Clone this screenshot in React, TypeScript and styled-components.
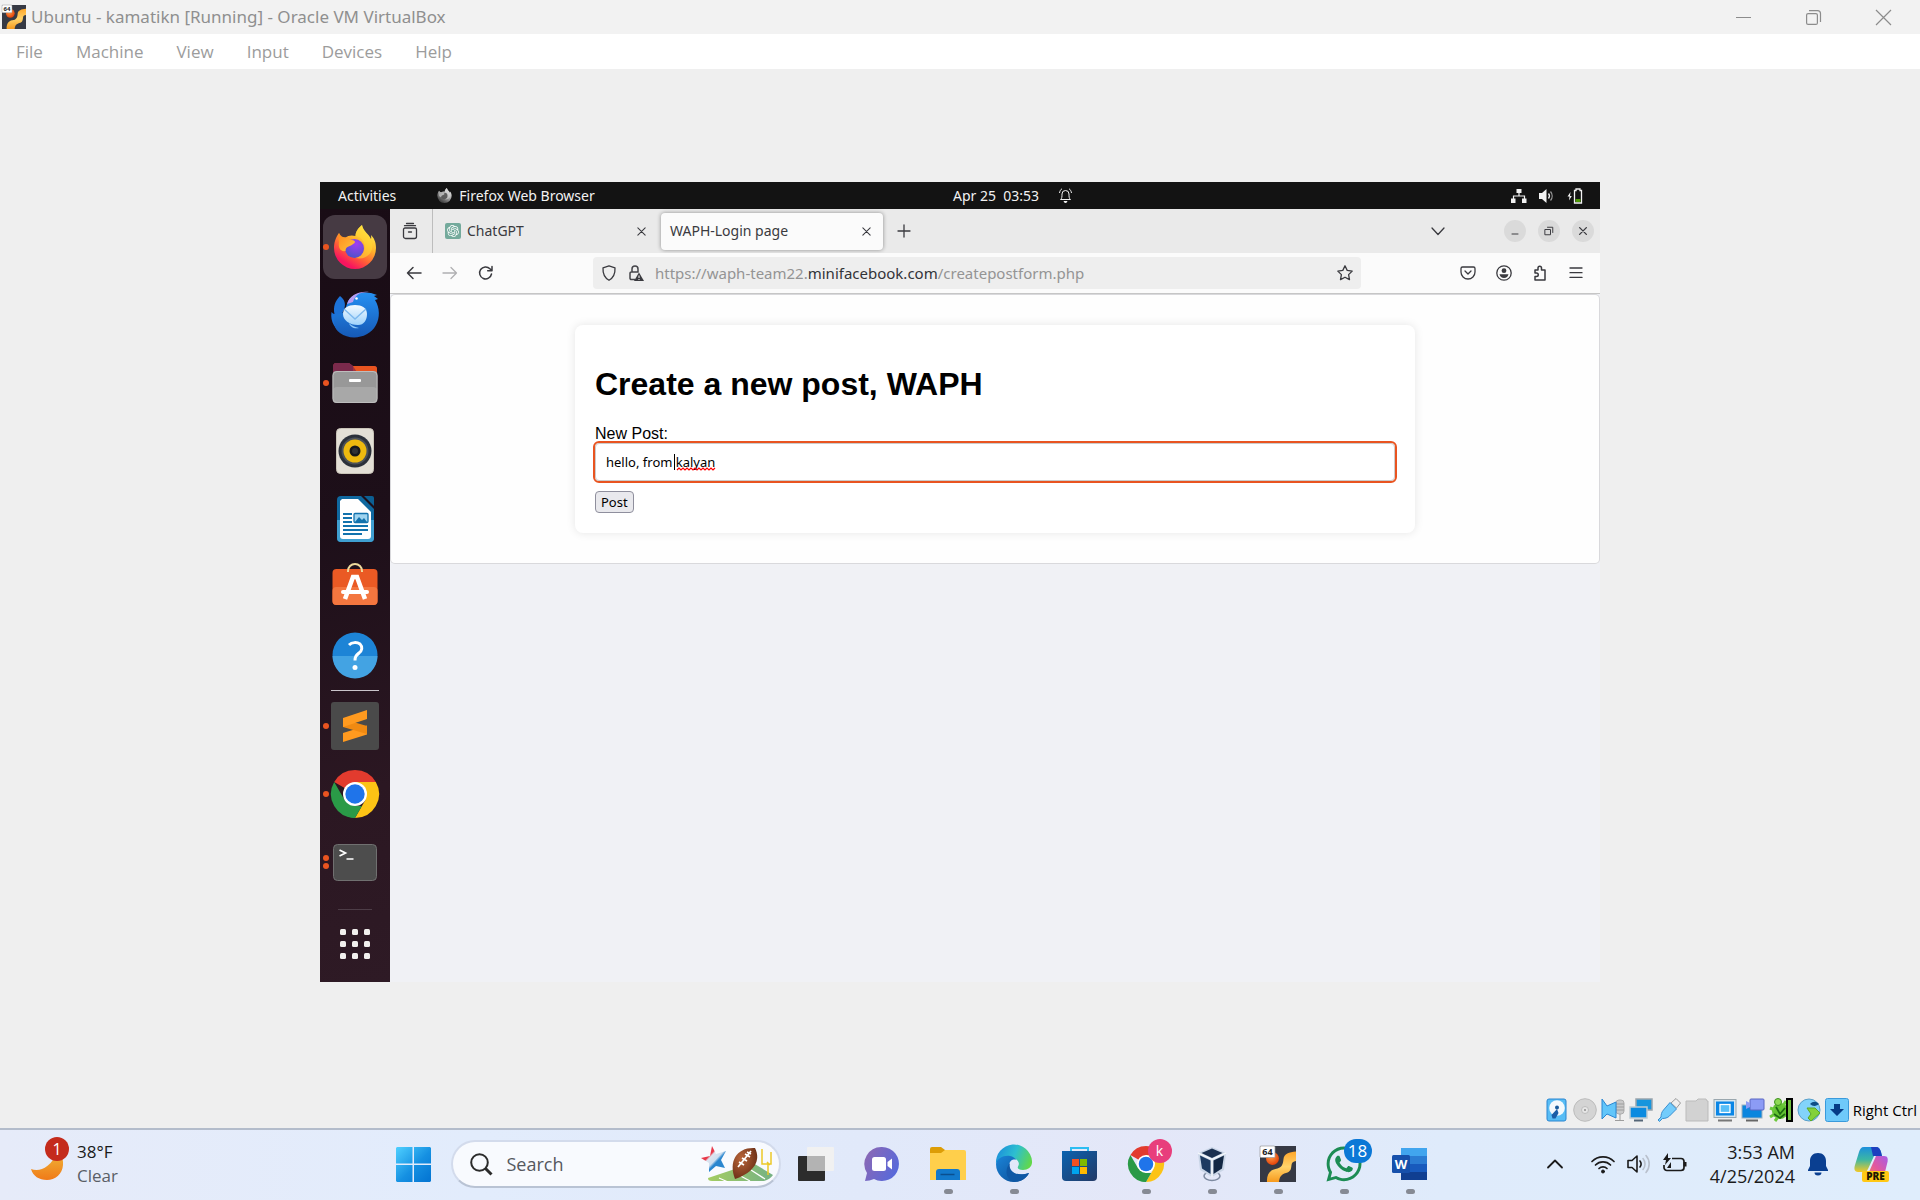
import React from "react";
import styled, { createGlobalStyle } from "styled-components";
import { SiOpenai } from "react-icons/si";
import { FaWhatsapp } from "react-icons/fa";

const winFont = `"Open Sans", "Noto Sans", sans-serif`;
const gnomeFont = `"Noto Sans", "Open Sans", sans-serif`;
const pageFont = `"Liberation Sans", Arial, sans-serif`;

const GlobalStyle = createGlobalStyle`
  * { box-sizing: border-box; }
  body { margin: 0; background: #efefef; font-family: ${winFont}; }
  button { border: 0; background: none; padding: 0; margin: 0; font: inherit; color: inherit; }
  svg { display: block; flex: none; overflow: visible; }
`;

/* ---------- host window ---------- */

const Desktop = styled.div`
  min-height: 100vh;
  display: flex;
  flex-direction: column;
`;

const TitleBar = styled.header`
  height: 34px;
  flex: none;
  display: flex;
  align-items: center;
  gap: 5px;
  padding: 0 2px;
  background: #f2f2f2;
  color: #8f8f8f;
`;

const WindowTitle = styled.h1`
  flex: 1;
  margin: 0;
  font-family: ${gnomeFont};
  font-size: 17px;
  font-weight: 400;
  line-height: 24px;
  white-space: nowrap;
`;

const WindowButton = styled.button`
  width: 70px;
  height: 34px;
  display: grid;
  place-items: center;
  color: #8c8c8c;
`;

const WindowButtons = styled.div`
  display: flex;
`;

const MenuBar = styled.nav`
  height: 35px;
  flex: none;
  display: flex;
  align-items: center;
  gap: 33px;
  padding: 0 16px;
  background: #ffffff;
  color: #9c9c9c;
`;

const MenuButton = styled.button`
  font-size: 17px;
  line-height: 24px;
`;

const Stage = styled.main`
  flex: 1;
  display: flex;
  align-items: center;
  justify-content: center;
`;

const StatusBar = styled.footer`
  height: 33px;
  flex: none;
  display: flex;
  align-items: center;
  justify-content: flex-end;
  gap: 4px;
  padding: 0 3px 4px;
  font-size: 15px;
  line-height: 24px;
  color: #000000;
`;

/* ---------- guest desktop ---------- */

const Guest = styled.section`
  width: 100%;
  max-width: 1280px;
  min-height: 800px;
  display: flex;
  flex-direction: column;
  background: #f0f1f5;
  font-family: ${gnomeFont};
`;

const TopBar = styled.div`
  height: 27px;
  flex: none;
  display: grid;
  grid-template-columns: 1fr auto 1fr;
  align-items: center;
  padding: 0 17px 0 18px;
  background: #131313;
  color: #f2f2f2;
  font-size: 14px;
  line-height: 20px;
`;

const TopGroup = styled.div<{ $gap: number; $end?: boolean }>`
  display: flex;
  align-items: center;
  gap: ${(p) => p.$gap}px;
  justify-content: ${(p) => (p.$end ? "flex-end" : "flex-start")};
`;

const TopApp = styled.button`
  display: flex;
  align-items: center;
  gap: 7px;
`;

const ClockButton = styled.button`
  display: flex;
  align-items: center;
  gap: 20px;
  margin-left: 104px;
  white-space: pre;
`;

const GuestBody = styled.div`
  flex: 1;
  display: flex;
`;

const Dock = styled.nav`
  width: 70px;
  flex: none;
  padding-top: 4px;
  display: flex;
  flex-direction: column;
  align-items: center;
  background: linear-gradient(165deg, #190c15 0%, #1d0f19 40%, #2b1722 75%, #2e1a25 100%);
`;

const DockItem = styled.button`
  position: relative;
  width: 70px;
  height: 68px;
  display: grid;
  place-items: center;
`;

const DockTile = styled.span<{ $active?: boolean }>`
  width: 64px;
  height: 64px;
  border-radius: 12px;
  display: grid;
  place-items: center;
  background: ${(p) => (p.$active ? "#463a43" : "transparent")};
`;

const Running = styled.span`
  position: absolute;
  left: 3px;
  top: 0;
  bottom: 0;
  display: flex;
  flex-direction: column;
  justify-content: center;
  gap: 2px;
`;

const RunningDot = styled.i`
  width: 6px;
  height: 6px;
  border-radius: 3px;
  background: #e95420;
`;

const DockRule = styled.hr<{ $faint?: boolean }>`
  width: ${(p) => (p.$faint ? 34 : 48)}px;
  height: 1px;
  flex: none;
  border: 0;
  margin: ${(p) => (p.$faint ? "auto 0 0" : "1px 0")};
  background: ${(p) => (p.$faint ? "#4d3d47" : "#c9c4ca")};
`;

const AppsButton = styled.button`
  height: 72px;
  flex: none;
  padding-bottom: 4px;
  display: grid;
  place-items: center;
`;

/* ---------- browser ---------- */

const Browser = styled.div`
  flex: 1;
  min-width: 0;
  display: flex;
  flex-direction: column;
  color: #3a3a3f;
`;

const TabStrip = styled.div`
  height: 44px;
  flex: none;
  display: flex;
  align-items: center;
  background: #eaeaea;
  font-size: 14px;
  line-height: 20px;
`;

const FirefoxView = styled.button`
  width: 43px;
  height: 44px;
  display: grid;
  place-items: center;
  padding-right: 2px;
  border-right: 1px solid #bdbdbd;
`;

const Tab = styled.div<{ $active?: boolean }>`
  width: ${(p) => (p.$active ? 222 : 228)}px;
  height: 37px;
  display: flex;
  align-items: center;
  gap: 6px;
  padding: ${(p) => (p.$active ? "0 11px 0 9px" : "0 14px 0 12px")};
  border-radius: 4px;
  background: ${(p) => (p.$active ? "#fbfbfb" : "transparent")};
  box-shadow: ${(p) => (p.$active ? "0 0 4px rgba(0, 0, 0, 0.4)" : "none")};
`;

const TabLabel = styled.span`
  flex: 1;
  white-space: nowrap;
`;

const SmallButton = styled.button`
  width: 12px;
  height: 20px;
  display: grid;
  place-items: center;
`;

const NewTab = styled.button`
  width: 42px;
  height: 36px;
  display: grid;
  place-items: center;
`;

const TabTools = styled.div`
  flex: 1;
  display: flex;
  align-items: center;
  justify-content: flex-end;
  gap: 12px;
  padding-right: 6px;
`;

const ListTabs = styled.button`
  width: 36px;
  height: 36px;
  margin-right: 36px;
  display: grid;
  place-items: center;
`;

const RoundButton = styled.button`
  width: 22px;
  height: 22px;
  border-radius: 11px;
  display: grid;
  place-items: center;
  background: #dadada;
`;

const Toolbar = styled.div`
  height: 41px;
  flex: none;
  display: flex;
  align-items: center;
  padding: 0 10px 0 16px;
  background: #fbfbfb;
  border-bottom: 1px solid #c6c6c6;
`;

const ToolGroup = styled.div`
  flex: 1;
  display: flex;
  gap: 20px;
`;

const ToolButton = styled.button`
  width: 16px;
  height: 32px;
  display: grid;
  place-items: center;
`;

const UrlBar = styled.div`
  width: 768px;
  height: 32px;
  display: flex;
  align-items: center;
  gap: 11px;
  padding: 0 8px;
  border-radius: 4px;
  background: #eeeeee;
`;

const Url = styled.div`
  flex: 1;
  font-size: 15px;
  line-height: 22px;
  color: #949494;
  white-space: nowrap;
`;

const Host = styled.span`
  color: #333338;
`;

const RightTools = styled.div`
  margin-left: 99px;
  display: flex;
  align-items: center;
  gap: 20px;
  padding-right: 6px;
`;

const WebPage = styled.article`
  margin: 1px 1px 0;
  padding: 30px;
  background: #fefefe;
  border-radius: 4px;
  box-shadow: 0 0 0 1px #d9d9dc;
  font-family: ${pageFont};
  color: #000000;
`;

const Card = styled.div`
  max-width: 840px;
  margin: 0 auto;
  padding: 20px;
  border-radius: 8px;
  background: #ffffff;
  box-shadow: 0 0 10px rgba(0, 0, 0, 0.1);
`;

const PostHeading = styled.h2`
  margin: 20px 0 22px;
  font-size: 32px;
  line-height: 38px;
`;

const PostLabel = styled.label`
  display: block;
  font-size: 16px;
  line-height: 18px;
`;

const PostField = styled.div`
  position: relative;
  margin-bottom: 10px;
`;

const PostInput = styled.input`
  display: block;
  width: 100%;
  height: 38px;
  padding: 10px;
  border: 1px solid #cccccc;
  border-radius: 4px;
  outline: 2px solid #e95420;
  font-family: ${gnomeFont};
  font-size: 13px;
  background: #ffffff;
  color: #000000;
`;

const Caret = styled.i`
  position: absolute;
  left: 79px;
  top: 11px;
  width: 1px;
  height: 16px;
  background: #000000;
`;

const Squiggle = styled.svg`
  position: absolute;
  left: 82px;
  top: 24px;
`;

const PostButton = styled.button`
  display: block;
  height: 22px;
  padding: 0 5px;
  border: 1px solid #8f8f9d;
  border-radius: 4px;
  background: #e9e9ed;
  font-family: ${gnomeFont};
  font-size: 13px;
  line-height: 20px;
`;

/* ---------- taskbar ---------- */

const Taskbar = styled.footer`
  height: 72px;
  flex: none;
  display: grid;
  grid-template-columns: 1fr auto 1fr;
  align-items: center;
  padding-bottom: 2px;
  border-top: 2px solid #b3bccb;
  background: linear-gradient(90deg, #e6ebf9 0%, #e2ecfc 25%, #e1e9fa 45%, #e4e7f8 60%, #dfebfb 75%, #dfedfc 100%);
`;

const Weather = styled.button`
  justify-self: start;
  display: flex;
  align-items: center;
  gap: 9px;
  padding-left: 30px;
  text-align: left;
  font-size: 17px;
  line-height: 24px;
  color: #1b1b1b;
`;

const Muted = styled.span`
  color: #5a5e66;
`;

const Lines = styled.span`
  display: grid;
`;

const Launcher = styled.div`
  display: flex;
  align-items: center;
  margin-right: 82px;
`;

const StartButton = styled.button`
  margin-right: 20px;
`;

const SearchBox = styled.label`
  width: 330px;
  height: 48px;
  margin-right: 2px;
  display: flex;
  align-items: center;
  gap: 14px;
  padding: 0 6px 0 17px;
  border: 2px solid #d3dbec;
  border-bottom-color: #b9c3d4;
  border-radius: 24px;
  background: #f8fafe;
`;

const SearchInput = styled.input`
  flex: 1;
  min-width: 0;
  padding: 0;
  border: 0;
  outline: 0;
  background: transparent;
  font-family: ${winFont};
  font-size: 18px;
  line-height: 26px;
  &::placeholder {
    color: #55585e;
    opacity: 1;
  }
`;

const TaskButton = styled.button`
  position: relative;
  width: 66px;
  height: 68px;
  display: grid;
  place-items: center;
`;

const OpenMark = styled.i`
  position: absolute;
  left: 29px;
  bottom: 4px;
  width: 9px;
  height: 5px;
  border-radius: 3px;
  background: #868a94;
`;

const Badge = styled.span<{ $bg: string; $wide?: boolean }>`
  position: absolute;
  right: ${(p) => (p.$wide ? 5 : 7)}px;
  top: 9px;
  width: ${(p) => (p.$wide ? 28 : 24)}px;
  height: 24px;
  border-radius: 12px;
  background: ${(p) => p.$bg};
  color: #ffffff;
  font-size: ${(p) => (p.$wide ? 17 : 14)}px;
  line-height: 24px;
  text-align: center;
`;

const MoonBox = styled.span`
  position: relative;
  width: 38px;
  height: 48px;
`;

const AlertBadge = styled.span`
  position: absolute;
  left: 15px;
  top: -3px;
  width: 24px;
  height: 24px;
  border-radius: 12px;
  background: #c42b1c;
  color: #ffffff;
  font-size: 16px;
  line-height: 24px;
  text-align: center;
`;

const MoonArt = styled.svg`
  margin-top: 11px;
`;

const Tray = styled.div`
  justify-self: end;
  display: flex;
  align-items: center;
  padding-right: 32px;
  color: #1b1b1b;
`;

const Chevron = styled.button`
  margin-right: 28px;
`;

const TrayGroup = styled.button`
  display: flex;
  align-items: center;
  gap: 12px;
`;

const Clock = styled.button`
  margin: 0 13px 0 23px;
  display: grid;
  text-align: right;
  font-size: 18px;
  line-height: 24px;
`;

const CopilotButton = styled.button`
  position: relative;
  margin-left: 26px;
`;

const PreTag = styled.span`
  position: absolute;
  right: -1px;
  bottom: -1px;
  width: 27px;
  height: 11px;
  border-radius: 2px;
  background: #ffc815;
  color: #201600;
  font-size: 10px;
  font-weight: 800;
  line-height: 11px;
  text-align: center;
`;

/* ---------- drawings ---------- */

const VmLogo = ({ size }: { size: number }) => (
  <svg width={size} height={size} viewBox="0 0 36 36">
    <defs>
      <linearGradient id="vmflow" x1="0" y1="0" x2="0" y2="1">
        <stop offset="0" stopColor="#ffa62a" />
        <stop offset=".5" stopColor="#ffd36b" />
        <stop offset="1" stopColor="#f79a1d" />
      </linearGradient>
      <radialGradient id="vmball" cx=".4" cy=".35" r=".7">
        <stop offset="0" stopColor="#ffa04a" />
        <stop offset="1" stopColor="#e23c05" />
      </radialGradient>
    </defs>
    <rect width="36" height="36" fill="#363944" />
    <path d="M36 5.500C29 6 24 8 23.500 13c-.5 6-2 9-8 10-6 1-9 6-8.500 13h12c.5-5 2-7.500 7-9 5-1.500 5-4 5.500-8 .3-2.500 1.500-3.500 4.500-4z" fill="url(#vmflow)" />
    <circle cx="12.500" cy="12.500" r="6.500" fill="url(#vmball)" />
    <rect x="0" y="0" width="15" height="11.500" rx="1" fill="#fff" stroke="#9a9a9a" strokeWidth=".7" />
    <text x="7.500" y="9" textAnchor="middle" fontFamily="Open Sans" fontSize="9" fontWeight="700" fill="#222">64</text>
  </svg>
);

const Chrome = ({ size }: { size: number }) => (
  <svg width={size} height={size} viewBox="0 0 48 48">
    <path d="M24 24 3.200 12A24 24 0 0 1 44.800 12L44.800 12H24z" fill="#e23b2e" />
    <path d="M3.200 12 13.600 30 24 36 24 48A24 24 0 0 1 3.200 12z" fill="#2a9a47" />
    <path d="M44.800 12H24L34.400 30 24 48A24 24 0 0 0 44.800 12z" fill="#fcc315" />
    <path d="M13.600 30 24 36H30.900L24 48A24 24 0 0 1 18 47z" fill="#2a9a47" />
    <circle cx="24" cy="24" r="12" fill="#fff" />
    <circle cx="24" cy="24" r="9.700" fill="#1f74ea" />
  </svg>
);

const FoxArt = styled.svg<{ $mono?: boolean }>`
  filter: ${(p) => (p.$mono ? "grayscale(1)" : "none")};
`;

const Firefox = ({ size = 44, mono }: { size?: number; mono?: boolean }) => (
  <FoxArt $mono={mono} width={size} height={size} viewBox="0 0 44 44">
    <defs>
      <linearGradient id="ffbody" x1=".85" y1=".1" x2=".3" y2="1">
        <stop offset="0" stopColor="#fff14d" />
        <stop offset=".35" stopColor="#ffb52a" />
        <stop offset=".65" stopColor="#ff5e37" />
        <stop offset=".9" stopColor="#f7155f" />
      </linearGradient>
      <radialGradient id="ffglobe" cx=".6" cy=".25" r=".8">
        <stop offset="0" stopColor="#a23df2" />
        <stop offset="1" stopColor="#4a53c9" />
      </radialGradient>
      <linearGradient id="fffox" x1="0" y1="0" x2="1" y2="1">
        <stop offset="0" stopColor="#ff8a1e" />
        <stop offset="1" stopColor="#ffc43b" />
      </linearGradient>
    </defs>
    <path d="M29 0c-4 3-6.500 7-6.500 11-7-2-12 2-13 6L6 8C2 13 1 19 1 23a21 21 0 0 0 42 0c0-6-2-10-5-13 .3 2 .3 3 0 4C36 9 30 6 29 0z" fill="url(#ffbody)" />
    <circle cx="21.500" cy="23.500" r="9.500" fill="url(#ffglobe)" />
    <path d="M6 8c1 2 2.500 3.500 4 4 3 0 4.500 1 6 3h3c3 .5 3.500 1.500 2.500 3-2 2-5 3-7 4-1.500 1-2 2-2 4C7 27 5 22 6 17c-.6-3-.6-6 0-9z" fill="url(#fffox)" />
    <path d="M29 0c-4 3-6.500 7-6.500 11 6 1 9.500 6 9 12-.5 5-4 9-9 10 9 2 16-3 17-11C40 13 30 9 29 0z" fill="#ffd735" opacity=".6" />
  </FoxArt>
);

const Thunderbird = () => (
  <svg width="48" height="46" viewBox="0 0 48 46">
    <defs>
      <linearGradient id="tb" x1="0" y1="0" x2="0" y2="1">
        <stop offset="0" stopColor="#2590f2" />
        <stop offset="1" stopColor="#1659b6" />
      </linearGradient>
      <linearGradient id="tbm" x1="0" y1="0" x2="0" y2="1">
        <stop offset="0" stopColor="#f4faff" />
        <stop offset="1" stopColor="#9fd3fb" />
      </linearGradient>
    </defs>
    <path d="M9 4c5 4 6 8 4 14l-3 5C5 31 8 37 14 42 4 38-1 30 .5 20c1 1 2 2 3 2C2 15 4 9 9 4z" fill="#1c72d8" />
    <path d="M16 12C19 3 28-1 40 1l6 2-3 1 4 3-3 1c5 8 5 18 1 25-7 13-25 16-36 8C3 37 2 30 4 24l9-4z" fill="url(#tb)" />
    <path d="M16 12C19 3 28-1 38 0c-11 0-14 4-16 10-2 1-4 1-6 2z" fill="#b79cf2" />
    <circle cx="25.500" cy="6.500" r="1.300" fill="#fff" />
    <path d="M12 22c0-6 5-9 12-9s12 3 12 9-3 11-9 11c-9 0-15-5-15-11z" fill="url(#tbm)" />
    <path d="M13 17l11 10 11-10" fill="none" stroke="#7cb8ee" strokeWidth="1.300" />
    <path d="M18 31c3 3 6 4 10 5-5 1-9-1-10-5z" fill="#8cc9fa" />
  </svg>
);

const Files = () => (
  <svg width="46" height="42" viewBox="0 0 46 42">
    <path d="M1 5c0-2.500 1-4 3-4h13l4 3h21c2 0 3 1 3 3v8H1z" fill="#a8323a" />
    <path d="M21 4h21c2 0 3 1 3 3v8H28z" fill="#e95420" />
    <path d="M1 5c0-2.500 1-4 3-4h13l4 3v11H1z" fill="#7b2a4c" />
    <rect x=".5" y="9" width="45" height="32" rx="4" fill="#989898" />
    <rect x="1" y="25" width="44" height="16" rx="4" fill="#a8a8a8" />
    <rect x="1" y="9.500" width="44" height="31" rx="4" fill="none" stroke="#bdbdbd" />
    <rect x="17" y="17" width="12" height="3" rx="1" fill="#fff" />
  </svg>
);

const Rhythmbox = () => (
  <svg width="38" height="46" viewBox="0 0 38 46">
    <rect x=".5" y=".5" width="37" height="45" rx="4" fill="#e3dfd6" stroke="#c9c4b8" />
    <circle cx="19" cy="23" r="16.500" fill="#2b303a" />
    <circle cx="19" cy="23" r="13.500" fill="#4c5158" />
    <circle cx="19" cy="23" r="11.500" fill="#edb90f" />
    <circle cx="19" cy="23" r="5.500" fill="#17191c" />
    <circle cx="19" cy="23" r="3" fill="#303236" />
  </svg>
);

const Writer = () => (
  <svg width="38" height="46" viewBox="0 0 38 46">
    <path d="M5 0h20l13 13v29a4 4 0 0 1-4 4H5a4 4 0 0 1-4-4V4a4 4 0 0 1 4-4z" fill="#0f689f" />
    <path d="M1 24h37v18a4 4 0 0 1-4 4H5a4 4 0 0 1-4-4z" fill="#3f9fd0" />
    <path d="M28 0h8a2 2 0 0 1 2 2v8z" fill="#0c5f93" />
    <path d="M6 3h16l13 13v24a3 3 0 0 1-3 3H7a3 3 0 0 1-3-3V5z" fill="#fff" />
    <path d="M7 18h9M7 22h9M7 26h9M7 30h25M7 34h25M7 38h19" stroke="#1272ad" strokeWidth="2" />
    <rect x="18" y="17.500" width="14" height="9" rx="1" fill="#9fd4f0" stroke="#1272ad" strokeWidth="1.300" />
    <path d="M19 26l4-5 3 3 2-2 3 4z" fill="#1272ad" />
  </svg>
);

const Software = () => (
  <svg width="46" height="48" viewBox="0 0 46 48">
    <rect x=".5" y="6" width="45" height="36" rx="4" fill="#ea5a24" />
    <rect x=".5" y="24" width="45" height="18" rx="4" fill="#f3763f" />
    <path d="M16 9V8a7 7 0 0 1 14 0v1" fill="none" stroke="#eeda9c" strokeWidth="2" />
    <path d="M13 36l8-22h4l8 22" fill="none" stroke="#fff" strokeWidth="4.500" />
    <path d="M11 29h24" stroke="#fff" strokeWidth="4" strokeLinecap="round" />
  </svg>
);

const Help = () => (
  <svg width="46" height="46" viewBox="0 0 46 46">
    <circle cx="23" cy="23" r="22.500" fill="#1d84d6" />
    <path d="M.5 24a22.500 22.500 0 0 0 45 0z" fill="#43a3e3" />
    <path d="M17 13c3-3 8-3 11-1 3 3 2 7-1 9-3 2.500-4 3.500-4 7.500" fill="none" stroke="#fff" strokeWidth="3" />
    <circle cx="23" cy="35.500" r="2.500" fill="#fff" />
  </svg>
);

const Sublime = () => (
  <svg width="48" height="48" viewBox="0 0 48 48">
    <rect width="48" height="48" rx="3" fill="#4a4a4a" />
    <path d="M12 31l24-7.500v9L12 40z" fill="#ff9a1f" />
    <path d="M12 17l24 7v8l-24-7z" fill="#f08a12" />
    <path d="M12 16l24-8v9l-24 8z" fill="#ff9a1f" />
  </svg>
);

const Terminal = () => (
  <svg width="44" height="37" viewBox="0 0 44 37">
    <rect x=".5" y=".5" width="43" height="36" rx="4" fill="#4d4d4d" stroke="#707070" />
    <path d="M6.500 6l6 3-6 3M13.500 15h7" fill="none" stroke="#fff" strokeWidth="1.700" />
  </svg>
);

const AppGrid = () => (
  <svg width="30" height="30" viewBox="0 0 30 30" fill="#f3f1ef">
    {[0, 12, 24].map((y) => [0, 12, 24].map((x) => <rect key={`${x}-${y}`} x={x} y={y} width="6" height="6" rx="1.500" />))}
  </svg>
);

const Glyph = ({ d, size = 16, w = 1.3 }: { d: string; size?: number; w?: number }) => (
  <svg width={size} height={size} viewBox="0 0 16 16" fill="none" stroke="currentColor" strokeWidth={w} strokeLinecap="round" strokeLinejoin="round">
    <path d={d} />
  </svg>
);

const paths = {
  view: "M1.500 6.500a1.500 1.500 0 0 1 1.500-1.500h10a1.500 1.500 0 0 1 1.500 1.500v7a2 2 0 0 1-2 2h-9a2 2 0 0 1-2-2zM2.500 2.700h11M4.500.5h7M6.500 9h3",
  close: "M3.500 3.500l9 9M12.500 3.500l-9 9",
  plus: "M8 2v12M2 8h12",
  back: "M15 8H1.500M7 2.500L1.500 8 7 13.500",
  forward: "M1 8h13.500M9 2.500L14.500 8 9 13.500",
  reload: "M13.500 9a6 6 0 1 1-1.600-5.300L13.800 5.600M14 1.500v4.300H9.700",
  shield: "M8 .8l6 2c.3 5.500-1.500 10-6 12.500C3.500 12.800 1.700 8.300 2 2.800z",
  star: "M8 .8l2.200 4.600 5 .7-3.600 3.500.9 5L8 12.200l-4.500 2.400.9-5L.8 6.100l5-.7z",
  pocket: "M1 3.500A1.500 1.500 0 0 1 2.500 2h11A1.500 1.500 0 0 1 15 3.500V7a7 7 0 0 1-14 0zM5 6l3 3 3-3",
  puzzle: "M3 5h3V3a1.700 1.700 0 0 1 3.500 0v2H13v10H3v-3.500h1.500a1.700 1.700 0 0 0 0-3.500H3z",
  menu: "M2 3h12M2 7.700h12M2 12.400h12",
  down: "M2 5l6 6.500L14 5",
};

const Lock = () => (
  <svg width="16" height="16" viewBox="0 0 16 16">
    <path d="M4 7V4a3 3 0 0 1 6 0v3M7 14.500H3.300A1.300 1.300 0 0 1 2 13.200V8.300A1.300 1.300 0 0 1 3.300 7h7.400" fill="none" stroke="#45454a" strokeWidth="1.500" />
    <path d="M11 7.500l5 8.500H6z" fill="#3a3a3f" />
    <path d="M11 10.500v2.500M11 14v1" stroke="#fff" />
  </svg>
);

const Account = () => (
  <svg width="16" height="16" viewBox="0 0 16 16">
    <circle cx="8" cy="8" r="7.200" fill="none" stroke="#3a3a3f" strokeWidth="1.300" />
    <circle cx="8" cy="5.700" r="2.400" fill="#3a3a3f" />
    <path d="M3.500 9.300h9a4.600 4.600 0 0 1-9 0z" fill="#3a3a3f" />
  </svg>
);

const SystemIcons = () => (
  <>
    <svg width="16" height="14" viewBox="0 0 16 14" fill="#f2f2f2">
      <path d="M5.500 0h5v4h-5zM0 9.500h4.500V14H0zM11 9.500h4.500V14H11z" />
      <path d="M8 4v3M2.500 10V7h11v3" fill="none" stroke="#f2f2f2" strokeWidth="1.200" />
    </svg>
    <svg width="16" height="16" viewBox="0 0 16 16">
      <path d="M0 5h3l4.500-4v14L3 11H0z" fill="#f2f2f2" />
      <path d="M9.500 5.500a4 4 0 0 1 0 5" fill="none" stroke="#f2f2f2" strokeWidth="1.300" />
      <path d="M11.500 3.500a7 7 0 0 1 0 9" fill="none" stroke="#999" strokeWidth="1.300" />
    </svg>
    <svg width="16" height="16" viewBox="0 0 16 16">
      <path d="M3.500 4L.5 8.500h2l-.5 4L4.800 8H3z" fill="#f2f2f2" />
      <path d="M7.500 2.500H9v-1.500h4v1.500h1.500v12.500h-7z" fill="none" stroke="#f2f2f2" strokeWidth="1.300" />
      <rect x="8.500" y="11" width="5" height="3" fill="#4e9a06" />
    </svg>
  </>
);

const Bell = () => (
  <svg width="13" height="16" viewBox="0 0 13 16" fill="none" stroke="#f2f2f2">
    <path d="M1.500 11.500c1.500-1 1.500-3 1.500-5.500a3.500 3.500 0 0 1 7 0c0 2.500 0 4.500 1.500 5.500zM.5 5C.8 3 1.800 1.500 3 .7M12.500 5c-.3-2-1.300-3.500-2.500-4.300" />
    <path d="M5 13.500h3L6.500 15z" fill="#f2f2f2" />
  </svg>
);

/* the row of device indicators under the guest screen */
const deviceIcons: { name: string; art: React.ReactNode }[] = [
  { name: "Hard disks", art: <><rect x="2" y="1" width="19" height="22" rx="2" fill="#58bdf5" stroke="#2a86d1" /><circle cx="12" cy="10" r="7.800" fill="#f3f9fd" /><circle cx="12" cy="9.500" r="2" fill="#185a9c" /><path d="M12 11l-5.500 6 1 3.500h3l3-5.500z" fill="#1b5ea8" /></> },
  { name: "Optical drives", art: <><circle cx="12" cy="12" r="11.300" fill="#d4d4d4" stroke="#bcbcbc" /><circle cx="12" cy="12" r="3.500" fill="#e6e6e6" stroke="#bdbdbd" /><circle cx="12" cy="12" r="1" fill="#8d8d8d" /></> },
  { name: "Audio", art: <><rect x="15" y="2" width="8" height="14" rx="3" fill="#c9c9c9" stroke="#acacac" /><path d="M14 6h9M14 9h9M14 12h9M19 16v6M14 22.500h9" stroke="#9d9d9d" /><path d="M1 1l5 7 9-4v16l-9-4-5 5z" fill="#62c6fa" stroke="#2a86d1" /></> },
  { name: "Network", art: <><rect x="7" y="1" width="16" height="11" fill="#1795dd" stroke="#9aa5ad" strokeWidth="1.500" /><rect x="1" y="9" width="17" height="11" fill="#0c8be0" stroke="#bfcbd2" strokeWidth="1.500" /><path d="M5 22.500h9" stroke="#567" strokeWidth="2" /></> },
  { name: "USB", art: <><path d="M14 5l5-4.500 4.500 4.500-4 5z" fill="#eee" stroke="#999" /><path d="M13 4.500l6.500 6.500-7 7c-2 2-5 2.500-7 2.500l-3 3L1 22l3-3c0-2 .5-5 2.500-7z" fill="#73ccfb" stroke="#3a8fd0" /></> },
  { name: "Shared folders", art: <path d="M1 3h10l2-2h8l1 2h1v20H1z" fill="#d2d2d2" stroke="#bbbbbb" /> },
  { name: "Display", art: <><rect x="1" y="1.500" width="22" height="18" fill="#d6e6ef" stroke="#9aa7ae" /><rect x="3" y="3.500" width="18" height="14" fill="#0a86e6" /><rect x="7" y="6.500" width="10" height="8" fill="#58bff8" stroke="#fff" strokeWidth="1.300" /><path d="M5 22.500h14" stroke="#777" strokeWidth="2" /></> },
  { name: "Recording", art: <><rect x="1" y="7" width="20" height="13" fill="#0b86de" stroke="#9db1bf" /><path d="M5 22.500h12" stroke="#666" strokeWidth="2" /><rect x="9" y="1" width="14" height="11" rx="1" fill="#8c9bf5" stroke="#5b66c2" /><path d="M9 5l-4-2v8l4-2z" fill="#8c9bf5" /></> },
  { name: "CPU", art: <><ellipse cx="11" cy="13" rx="8" ry="8" fill="#63c232" /><circle cx="9" cy="4" r="3.500" fill="#8ed955" stroke="#3b8f1d" /><path d="M1 10l5 2M1 19l5-3M6 23l3-4M17 3l-3 5" stroke="#6cc93c" strokeWidth="3" /><path d="M7 9l4 7 5-6M5 16l6 4 5-4" fill="none" stroke="#1d6a12" strokeWidth="1.700" /><rect x="18" y="1" width="5" height="22" fill="#6fbf3c" stroke="#000" strokeWidth="2" /></> },
  { name: "Mouse integration", art: <><circle cx="12" cy="12" r="11" fill="#82d3fa" stroke="#5a9fc9" /><path d="M13 6c3-3 6-3 9 0-2 2-6 3-9 0z" fill="#0f4f86" /><path d="M10 10h8l5 5-9 8-3-3 3-4z" fill="#83d13a" stroke="#5aa824" /></> },
  { name: "Keyboard", art: <><rect x=".5" y=".5" width="23" height="23" rx="2" fill="#6fc9fa" stroke="#3a9adb" /><path d="M9 6h6v5h4l-7 7-7-7h4z" fill="#063a86" /></> },
];

const Moon = () => (
  <MoonArt width="33" height="30" viewBox="0 0 33 30">
    <defs>
      <linearGradient id="moon" x1="0" y1="0" x2="0" y2="1">
        <stop offset="0" stopColor="#efb83a" />
        <stop offset="1" stopColor="#f07a18" />
      </linearGradient>
    </defs>
    <path d="M28 0c4 4 5.500 9 5 14-.5 9-8 15-16 15C9 29 3 25 1 18c8 3 19 0 27-18z" fill="url(#moon)" />
  </MoonArt>
);

const WindowsLogo = () => (
  <svg width="35" height="35" viewBox="0 0 35 35">
    <defs>
      <linearGradient id="win" gradientUnits="userSpaceOnUse" x1="0" y1="0" x2="32" y2="32">
        <stop offset="0" stopColor="#4fd0ff" />
        <stop offset=".6" stopColor="#1590e2" />
        <stop offset="1" stopColor="#0678d4" />
      </linearGradient>
    </defs>
    <path d="M1 0h15.500v16.500H0V1zM18 0h16l1 1v15.500H18zM0 18h16.500v17H1l-1-1zM18 18h17v16l-1 1H18z" fill="url(#win)" />
  </svg>
);

const Football = () => (
  <svg width="72" height="38" viewBox="0 0 72 38">
    <defs>
      <linearGradient id="star" x1="0" y1="0" x2="1" y2="1">
        <stop offset=".35" stopColor="#e8394a" />
        <stop offset=".4" stopColor="#dfe5ef" />
        <stop offset=".55" stopColor="#cfdff0" />
        <stop offset=".62" stopColor="#2a86cf" />
      </linearGradient>
      <linearGradient id="grass" x1="0" y1="0" x2="1" y2="0">
        <stop offset="0" stopColor="#a4cd62" />
        <stop offset="1" stopColor="#75b184" />
      </linearGradient>
      <radialGradient id="ball" cx=".35" cy=".35" r=".7">
        <stop offset="0" stopColor="#b9653a" />
        <stop offset="1" stopColor="#6b2f16" />
      </radialGradient>
    </defs>
    <path d="M7 33l45-15 20 12c-2 3-5 5-9 6H11c-3 0-4-1-4-3z" fill="url(#grass)" />
    <path d="M18 33l9 4M34 28l15 8M50 25l14 9" stroke="#fff" strokeWidth="1.300" />
    <path d="M11 1l4 8 10-3-5 9 4 8-9-2-7 6v-9l-8-5 9-2z" fill="url(#star)" />
    <path d="M54 3c6 12 0 24-20 31C27 16 36 2 54 3z" fill="url(#ball)" />
    <path d="M37 22L50 6M38 17l5 3M41 13l5 3M44 9l5 3M46 7l4 2" stroke="#fff" strokeWidth="1.700" />
    <path d="M61 4v15h9V7M67 19v11M66 17l3 3" fill="none" stroke="#ebc928" strokeWidth="1.500" />
  </svg>
);

const TaskView = () => (
  <svg width="36" height="34" viewBox="0 0 36 34">
    <rect x="0" y="9" width="27" height="25" rx="1" fill="#2c2c2c" />
    <rect x="9" y="0" width="27" height="24" rx="1" fill="#f1f1f1" />
    <rect x="9" y="9" width="18" height="15" fill="#b3b3b3" />
  </svg>
);

const Chat = () => (
  <svg width="34" height="34" viewBox="0 0 34 34">
    <defs>
      <linearGradient id="chat" x1="0" y1=".2" x2="1" y2=".7">
        <stop offset="0" stopColor="#8c68b4" />
        <stop offset="1" stopColor="#5569dc" />
      </linearGradient>
    </defs>
    <path d="M17 0a17 17 0 1 1-8 32c-3 1-6 2-9 2l2-8A17 17 0 0 1 17 0z" fill="url(#chat)" />
    <rect x="7" y="10" width="14" height="14" rx="2.500" fill="#fff" />
    <path d="M22.500 15l4.500-3.500v11L22.500 19z" fill="#fff" />
  </svg>
);

const Explorer = () => (
  <svg width="36" height="34" viewBox="0 0 36 34">
    <path d="M0 2a2 2 0 0 1 2-2h9l4 3v5H0z" fill="#dd9d06" />
    <path d="M0 6h11l4-3h19a2 2 0 0 1 2 2v28H0z" fill="#ffcf4b" />
    <path d="M6 25a3 3 0 0 1 3-3h18a3 3 0 0 1 3 3v8H6z" fill="#1279cb" />
    <path d="M10.500 27.500h14" stroke="#0a4f8e" strokeWidth="1.500" />
  </svg>
);

const Edge = () => (
  <svg width="36" height="36" viewBox="0 0 36 36">
    <defs>
      <linearGradient id="edgetop" x1="0" y1=".3" x2="1" y2=".6">
        <stop offset="0" stopColor="#1b8fdb" />
        <stop offset=".5" stopColor="#2dbfd0" />
        <stop offset="1" stopColor="#62d84a" />
      </linearGradient>
      <linearGradient id="edgelow" x1="0" y1="0" x2="1" y2="1">
        <stop offset="0" stopColor="#1a84d8" />
        <stop offset="1" stopColor="#0c4a92" />
      </linearGradient>
    </defs>
    <path d="M0 18A18 18 0 0 1 36 15c.6 6-4 9-9 9-4 0-6-1.500-5-3.500 2-3 0-7-4-8C10 10 2 12 0 18z" fill="url(#edgetop)" />
    <path d="M0 18c1-6 8-9 14-8 3 .5 5 2 6 4-4-2-7 2-7 6 0 7 9 11 20 7-3 6-9 9-15 9A18 18 0 0 1 0 18z" fill="url(#edgelow)" />
    <path d="M14 17c-2 8 6 14 19 10-3 6-9 9-15 9-8-3-10-12-4-19z" fill="#0f58a5" />
    <path d="M20 14c-3-1-6 2-6 5 1-2 3-3 6-1 2 1 1 2 1 3 2-3 2-5-1-7z" fill="#e4e9f8" />
  </svg>
);

const Store = () => (
  <svg width="36" height="36" viewBox="0 0 36 36">
    <defs>
      <linearGradient id="store" x1="0" y1="0" x2="1" y2="1">
        <stop offset="0" stopColor="#0a62b0" />
        <stop offset="1" stopColor="#233a66" />
      </linearGradient>
    </defs>
    <path d="M9 6V2h17v4" fill="none" stroke="#2cbdf2" strokeWidth="2" />
    <path d="M0 5h35v26a4 4 0 0 1-4 4H4a4 4 0 0 1-4-4z" fill="url(#store)" />
    <path d="M10 13h7v7h-7z" fill="#f25022" />
    <path d="M18 13h7v7h-7z" fill="#7fba00" />
    <path d="M10 21h7v7h-7z" fill="#00a4ef" />
    <path d="M18 21h7v7h-7z" fill="#ffb900" />
  </svg>
);

const VirtualBox = () => (
  <svg width="30" height="36" viewBox="0 0 30 36">
    <ellipse cx="15" cy="30" rx="8" ry="4.500" fill="none" stroke="#7d8aa0" strokeWidth="1.500" />
    <path d="M15 1l14 6-2 17-12 7-12-7L1 7z" fill="#c9d5e6" />
    <path d="M15 2.500l10.500 4.500L15 12 4.500 7z" fill="#1b3050" />
    <path d="M3 9.500l10.500 5V28L5 22.500z" fill="#1d3a61" />
    <path d="M27 9.500l-10.500 5V28l8.500-5.500z" fill="#122744" />
    <path d="M1 7l14 6.500L29 7M15 13.500V31" fill="none" stroke="#f2f6fb" strokeWidth="1.500" />
  </svg>
);

const Word = () => (
  <svg width="36" height="34" viewBox="0 0 36 34">
    <rect x="9" y="1" width="26" height="9" fill="#41a5ee" />
    <rect x="9" y="9" width="26" height="8" fill="#2b7cd3" />
    <rect x="9" y="17" width="26" height="8" fill="#185abd" />
    <rect x="9" y="25" width="26" height="8" fill="#103f91" />
    <rect x="0" y="8" width="18" height="18" rx="1.500" fill="#1650ab" />
    <text x="9" y="21.500" textAnchor="middle" fontFamily="Open Sans" fontSize="13" fontWeight="700" fill="#fff">W</text>
  </svg>
);

const Wifi = () => (
  <svg width="24" height="20" viewBox="0 0 24 20" fill="none" stroke="#1b1b1b" strokeWidth="1.700" strokeLinecap="round">
    <path d="M1 7.500a15.500 15.500 0 0 1 22 0M4.500 11a10.500 10.500 0 0 1 15 0M8 14.500a5.700 5.700 0 0 1 8 0" />
    <circle cx="12" cy="17.500" r="1.500" fill="#1b1b1b" strokeWidth="1" />
  </svg>
);

const Volume = () => (
  <svg width="24" height="20" viewBox="0 0 24 20" fill="none" strokeWidth="1.600" strokeLinecap="round" strokeLinejoin="round">
    <path d="M1 6.500h4l5-4.500v16l-5-4.500H1zM13 7a5 5 0 0 1 0 6" stroke="#1b1b1b" />
    <path d="M16 4.500a8.500 8.500 0 0 1 0 11M19 1.500a13 13 0 0 1 0 17" stroke="#b9c0cc" />
  </svg>
);

const Battery = () => (
  <svg width="24" height="20" viewBox="0 0 24 20" fill="none">
    <path d="M9 4.500h9a3 3 0 0 1 3 3v6a3 3 0 0 1-3 3H4a3 3 0 0 1-3-3V11" stroke="#1b1b1b" strokeWidth="1.700" />
    <path d="M22 8v4.500" stroke="#1b1b1b" strokeWidth="3" />
    <path d="M5-1L0 6h3L2 11l6-7H5zM4 14l4-6v6z" fill="#1b1b1b" />
  </svg>
);

const Notify = () => (
  <svg width="20" height="24" viewBox="0 0 20 24" fill="#0a3f91">
    <path d="M10 1c5 0 8 3.500 8 8v5l2 4v1H0v-1l2-4V9c0-4.500 3-8 8-8zM6.500 20.500h7a3.500 3 0 0 1-7 0z" />
  </svg>
);

const Copilot = () => (
  <svg width="34" height="34" viewBox="0 0 34 34">
    <defs>
      <linearGradient id="cpa" x1="0" y1="0" x2="0" y2="1">
        <stop offset="0" stopColor="#1c8fdc" />
        <stop offset=".5" stopColor="#3cb7a4" />
        <stop offset="1" stopColor="#f3c926" />
      </linearGradient>
      <linearGradient id="cpb" x1="1" y1="0" x2="0" y2="1">
        <stop offset="0" stopColor="#a65be8" />
        <stop offset=".5" stopColor="#e2589e" />
        <stop offset="1" stopColor="#fb8a4b" />
      </linearGradient>
    </defs>
    <path d="M10 0h12c3 0 4 2 5 5l1 4H20l-6 13c-1 2-2 3-4 3H4c-4 0-4-4-3-7L5 5c1-3 2-5 5-5z" fill="url(#cpa)" />
    <path d="M17 0h5c3 0 4 2 5 5l1 4h-9z" fill="#1c3fbf" />
    <path d="M22 9h8c4 0 4 3 3.500 6l-3 12c-1 4-3 6-6 6H12l3-8z" fill="url(#cpb)" />
  </svg>
);

/* ---------- data ---------- */

const dockApps: { name: string; icon: React.ReactNode; dots: number; active?: boolean }[] = [
  { name: "Firefox", icon: <Firefox />, dots: 1, active: true },
  { name: "Thunderbird", icon: <Thunderbird />, dots: 0 },
  { name: "Files", icon: <Files />, dots: 1 },
  { name: "Rhythmbox", icon: <Rhythmbox />, dots: 0 },
  { name: "Writer", icon: <Writer />, dots: 0 },
  { name: "Software", icon: <Software />, dots: 0 },
  { name: "Help", icon: <Help />, dots: 0 },
];

const openApps: typeof dockApps = [
  { name: "Sublime Text", icon: <Sublime />, dots: 1 },
  { name: "Chrome", icon: <Chrome size={48} />, dots: 1 },
  { name: "Terminal", icon: <Terminal />, dots: 2 },
];

const taskApps: { name: string; icon: React.ReactNode; open?: boolean; badge?: React.ReactNode }[] = [
  { name: "Task view", icon: <TaskView /> },
  { name: "Chat", icon: <Chat /> },
  { name: "File Explorer", icon: <Explorer />, open: true },
  { name: "Edge", icon: <Edge />, open: true },
  { name: "Store", icon: <Store /> },
  { name: "Chrome", icon: <Chrome size={36} />, open: true, badge: <Badge $bg="#e83e7c">k</Badge> },
  { name: "VirtualBox", icon: <VirtualBox />, open: true },
  { name: "Virtual machine", icon: <VmLogo size={36} />, open: true },
  { name: "WhatsApp", icon: <FaWhatsapp size={40} color="#1c8c54" />, open: true, badge: <Badge $bg="#0b78d6" $wide>18</Badge> },
  { name: "Word", icon: <Word />, open: true },
];

const DockEntry = ({ app }: { app: (typeof dockApps)[number] }) => (
  <DockItem aria-label={app.name}>
    <DockTile $active={app.active}>{app.icon}</DockTile>
    <Running>
      {Array.from({ length: app.dots }, (_, i) => (
        <RunningDot key={i} />
      ))}
    </Running>
  </DockItem>
);

const ForwardButton = styled(ToolButton)`
  color: #b0b0b2;
`;

export default function App() {
  return (
    <Desktop>
      <GlobalStyle />
      <TitleBar>
        <VmLogo size={24} />
        <WindowTitle>Ubuntu - kamatikn [Running] - Oracle VM VirtualBox</WindowTitle>
        <WindowButtons>
          <WindowButton aria-label="Minimize">
            <svg width="15" height="15" stroke="currentColor"><path d="M0 7.500h15" /></svg>
          </WindowButton>
          <WindowButton aria-label="Restore">
            <svg width="15" height="15" fill="none" stroke="currentColor" strokeWidth="1.200">
              <rect x=".6" y="3.600" width="10.800" height="10.800" rx="1.500" />
              <path d="M3 .6h8.500a3 3 0 0 1 3 3V12" />
            </svg>
          </WindowButton>
          <WindowButton aria-label="Close">
            <svg width="15" height="15" stroke="currentColor" strokeWidth="1.200"><path d="M0 0l15 15M15 0L0 15" /></svg>
          </WindowButton>
        </WindowButtons>
      </TitleBar>
      <MenuBar>
        {["File", "Machine", "View", "Input", "Devices", "Help"].map((m) => (
          <MenuButton key={m}>{m}</MenuButton>
        ))}
      </MenuBar>

      <Stage>
        <Guest>
          <TopBar>
            <TopGroup $gap={41}>
              <button>Activities</button>
              <TopApp>
                <Firefox size={15} mono />
                Firefox Web Browser
              </TopApp>
            </TopGroup>
            <ClockButton>
              {"Apr 25  03:53"}
              <Bell />
            </ClockButton>
            <TopGroup $gap={12} $end>
              <SystemIcons />
            </TopGroup>
          </TopBar>

          <GuestBody>
            <Dock>
              {dockApps.map((a) => <DockEntry key={a.name} app={a} />)}
              <DockRule />
              {openApps.map((a) => <DockEntry key={a.name} app={a} />)}
              <DockRule $faint />
              <AppsButton aria-label="Show applications"><AppGrid /></AppsButton>
            </Dock>

            <Browser>
              <TabStrip>
                <FirefoxView aria-label="Firefox View"><Glyph d={paths.view} /></FirefoxView>
                <Tab>
                  <svg width="16" height="16">
                    <rect width="16" height="16" rx="2" fill="#74aa9c" />
                    <g transform="translate(2 2)" color="#fff"><SiOpenai size={12} /></g>
                  </svg>
                  <TabLabel>ChatGPT</TabLabel>
                  <SmallButton aria-label="Close ChatGPT tab"><Glyph d={paths.close} size={13} /></SmallButton>
                </Tab>
                <Tab $active>
                  <TabLabel>WAPH-Login page</TabLabel>
                  <SmallButton aria-label="Close login tab"><Glyph d={paths.close} size={13} /></SmallButton>
                </Tab>
                <NewTab aria-label="New tab"><Glyph d={paths.plus} /></NewTab>
                <TabTools>
                  <ListTabs aria-label="List all tabs"><Glyph d={paths.down} /></ListTabs>
                  <RoundButton aria-label="Minimize browser"><Glyph d="M4 12h8" size={12} /></RoundButton>
                  <RoundButton aria-label="Restore browser"><Glyph d="M3 6h7v7H3zM6 3h7v7" size={12} /></RoundButton>
                  <RoundButton aria-label="Close browser"><Glyph d={paths.close} size={12} w={1.8} /></RoundButton>
                </TabTools>
              </TabStrip>
              <Toolbar>
                <ToolGroup>
                  <ToolButton aria-label="Back"><Glyph d={paths.back} w={1.5} /></ToolButton>
                  <ForwardButton aria-label="Forward" disabled><Glyph d={paths.forward} /></ForwardButton>
                  <ToolButton aria-label="Reload"><Glyph d={paths.reload} w={1.5} /></ToolButton>
                </ToolGroup>
                <UrlBar>
                  <Glyph d={paths.shield} />
                  <Lock />
                  <Url>
                    https://waph-team22.<Host>minifacebook.com</Host>/createpostform.php
                  </Url>
                  <ToolButton aria-label="Bookmark"><Glyph d={paths.star} /></ToolButton>
                </UrlBar>
                <RightTools>
                  <ToolButton aria-label="Pocket"><Glyph d={paths.pocket} /></ToolButton>
                  <ToolButton aria-label="Account"><Account /></ToolButton>
                  <ToolButton aria-label="Extensions"><Glyph d={paths.puzzle} w={1.5} /></ToolButton>
                  <ToolButton aria-label="Menu"><Glyph d={paths.menu} /></ToolButton>
                </RightTools>
              </Toolbar>
              <WebPage>
                <Card>
                  <PostHeading>Create a new post, WAPH</PostHeading>
                  <PostLabel htmlFor="post">New Post:</PostLabel>
                  <PostField>
                    <PostInput id="post" type="text" spellCheck={false} defaultValue="hello, from kalyan" />
                    <Caret />
                    <Squiggle width="38" height="4" viewBox="0 0 38 4">
                      <path d="M0 3l2-2 2 2 2-2 2 2 2-2 2 2 2-2 2 2 2-2 2 2 2-2 2 2 2-2 2 2 2-2 2 2 2-2 2 2 2-2" fill="none" stroke="#f00" strokeWidth="1.200" />
                    </Squiggle>
                  </PostField>
                  <PostButton>Post</PostButton>
                </Card>
              </WebPage>
            </Browser>
          </GuestBody>
        </Guest>
      </Stage>

      <StatusBar>
        {deviceIcons.map((d) => (
          <svg key={d.name} width="24" height="24" viewBox="0 0 24 24" role="img" aria-label={d.name}>{d.art}</svg>
        ))}
        <span>Right Ctrl</span>
      </StatusBar>

      <Taskbar>
        <Weather>
          <MoonBox>
            <Moon />
            <AlertBadge>1</AlertBadge>
          </MoonBox>
          <Lines>
            <span>38°F</span>
            <Muted>Clear</Muted>
          </Lines>
        </Weather>
        <Launcher>
          <StartButton aria-label="Start"><WindowsLogo /></StartButton>
          <SearchBox>
            <svg width="23" height="23" viewBox="0 0 23 23" fill="none" stroke="#2b2b2b">
              <circle cx="9.500" cy="9.500" r="8.300" strokeWidth="2" />
              <path d="M15.500 15.500l6 6" strokeWidth="3" />
            </svg>
            <SearchInput type="text" aria-label="Search" placeholder="Search" />
            <Football />
          </SearchBox>
          {taskApps.map((a) => (
            <TaskButton key={a.name} aria-label={a.name}>
              {a.icon}
              {a.badge}
              {a.open && <OpenMark />}
            </TaskButton>
          ))}
        </Launcher>
        <Tray>
          <Chevron aria-label="Hidden icons"><Glyph d="M1 11.500l7-7 7 7" w={1.800} /></Chevron>
          <TrayGroup aria-label="Network, volume and battery">
            <Wifi />
            <Volume />
            <Battery />
          </TrayGroup>
          <Clock>
            <span>3:53 AM</span>
            <span>4/25/2024</span>
          </Clock>
          <Notify />
          <CopilotButton aria-label="Copilot">
            <Copilot />
            <PreTag>PRE</PreTag>
          </CopilotButton>
        </Tray>
      </Taskbar>
    </Desktop>
  );
}
